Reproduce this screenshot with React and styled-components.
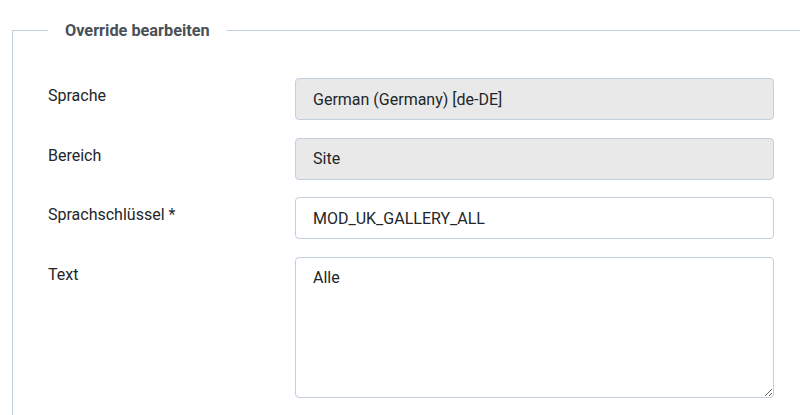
import React, { useState } from 'react';
import styled, { createGlobalStyle } from 'styled-components';

const GlobalStyle = createGlobalStyle`
  html, body {
    margin: 0;
    padding: 0;
    background: #ffffff;
  }
  body {
    font-family: Roboto, "Liberation Sans", sans-serif;
    color: #22262a;
  }
`;

const Page = styled.div`
  padding: 20px 0 0 12px;
  height: 415px;
  box-sizing: border-box;
  overflow: hidden;
`;

const Fieldset = styled.fieldset`
  margin: 0 -30px 0 0;
  border: 1px solid #c3cfe0;
  padding: 0 0 20px 35px;
  min-width: 0;
`;

const Legend = styled.legend`
  padding: 1px 17px 0;
  font-size: 16.3px;
  font-weight: 700;
  line-height: 20px;
  color: #495057;
`;

const Form = styled.div`
  display: grid;
  grid-template-columns: 247px 479px;
  row-gap: 17.67px;
  padding-top: 37px;
`;

const Label = styled.label`
  font-size: 16px;
  line-height: 24px;
  padding-top: 6px;
  color: #22262a;
`;

const Input = styled.input`
  box-sizing: border-box;
  width: 100%;
  height: 42px;
  margin: 0;
  padding: 0 17px;
  font-family: Roboto, "Liberation Sans", sans-serif;
  font-size: 16px;
  color: #22262a;
  background: ${(p) => (p.disabled ? '#e9e9e9' : '#ffffff')};
  border: 1px solid #c3cfe0;
  border-radius: 4px;
  outline: none;
  &:disabled {
    opacity: 1;
    -webkit-text-fill-color: #22262a;
  }
`;

const TextArea = styled.textarea`
  box-sizing: border-box;
  width: 100%;
  height: 141px;
  margin: 0;
  padding: 8px 17px;
  font-family: Roboto, "Liberation Sans", sans-serif;
  font-size: 16px;
  line-height: 24px;
  color: #22262a;
  background: #ffffff;
  border: 1px solid #c3cfe0;
  border-radius: 4px;
  outline: none;
  resize: vertical;
`;

const App = () => {
  const [key, setKey] = useState('MOD_UK_GALLERY_ALL');
  const [text, setText] = useState('Alle');

  return (
    <Page>
      <GlobalStyle />
      <Fieldset>
        <Legend>Override bearbeiten</Legend>
        <Form>
          <Label htmlFor="language">Sprache</Label>
          <Input id="language" type="text" value="German (Germany) [de-DE]" disabled readOnly />
          <Label htmlFor="client">Bereich</Label>
          <Input id="client" type="text" value="Site" disabled readOnly />
          <Label htmlFor="key">Sprachschlüssel *</Label>
          <Input id="key" type="text" value={key} onChange={(e) => setKey(e.target.value)} />
          <Label htmlFor="override">Text</Label>
          <TextArea id="override" value={text} onChange={(e) => setText(e.target.value)} />
        </Form>
      </Fieldset>
    </Page>
  );
};

export default App;
